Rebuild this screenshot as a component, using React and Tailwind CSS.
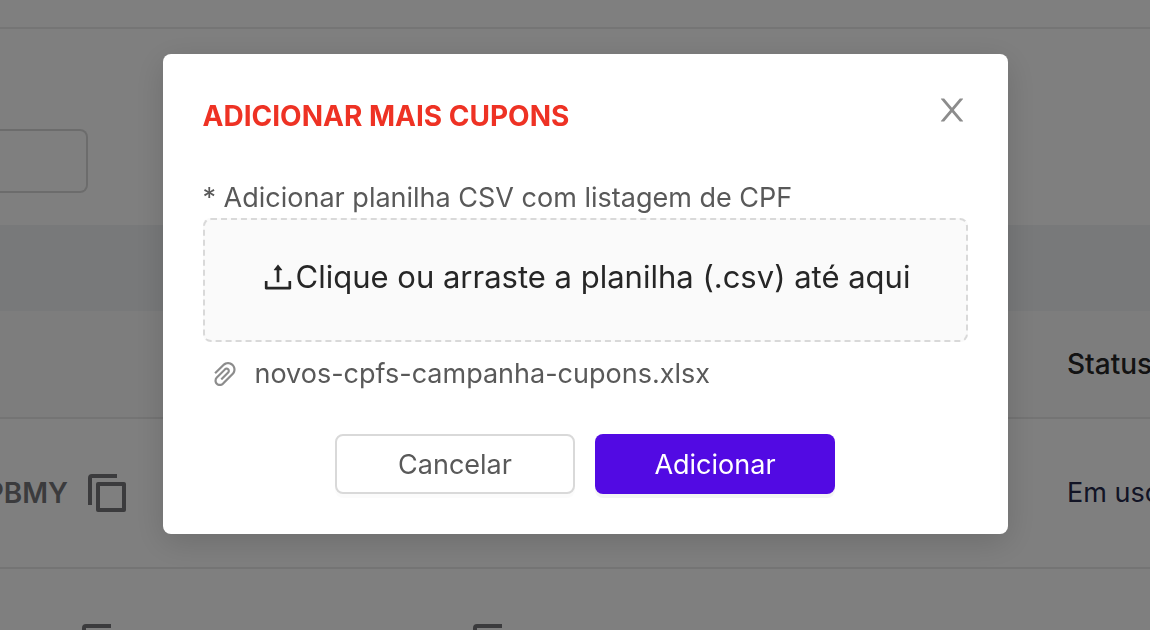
import React from "react";
import { AiOutlinePaperClip, AiOutlineUpload } from "react-icons/ai";

const CloseIcon = () => (
  <svg viewBox="0 0 1024 1024" className="size-9" fill="currentColor" aria-hidden="true">
    <path d="M563.8 512l262.5-312.9c4.4-5.2.7-13.1-6.1-13.1h-79.8c-4.7 0-9.2 2.1-12.3 5.7L511.6 449.8 295.1 191.7c-3-3.6-7.5-5.7-12.3-5.7H203c-6.8 0-10.5 7.9-6.1 13.1L459.4 512 196.9 824.9A7.95 7.95 0 0 0 203 838h79.8c4.7 0 9.2-2.1 12.3-5.7l216.5-258.1 216.5 258.1c3 3.6 7.5 5.7 12.3 5.7h79.8c6.8 0 10.5-7.9 6.1-13.1L563.8 512z" />
  </svg>
);

const CopyButton = () => (
  <button type="button" aria-label="Copiar" className="block shrink-0 text-[#77777a]">
    <svg viewBox="0 0 38 38" className="size-[38px]" fill="none" stroke="currentColor" strokeWidth="4" strokeLinejoin="round" aria-hidden="true">
      <path d="M2 31V4a2 2 0 0 1 2-2h25" />
      <rect x="10" y="10" width="26" height="26" />
    </svg>
  </button>
);

const CouponsPage = () => {
  return (
    <div className="h-screen overflow-hidden bg-white">
      <header className="h-[29px] border-b-2 border-[#ebebeb]" />
      <div className="pt-[100px] pb-8">
        <input
          type="text"
          aria-label="Buscar"
          className="block h-16 w-[88px] rounded-r-[8px] border-2 border-l-0 border-[#d9d9d9] px-4 text-[28px]"
        />
      </div>
      <div className="h-[86px] bg-[#f0f2f5]" />
      <table className="w-full table-fixed text-left text-[28px] leading-[44px]">
        <thead>
          <tr className="h-[107px] border-b-2 border-[#e8e8e8] bg-[#fbfbfb] text-[#262626]">
            <th className="w-[441px]" />
            <th />
            <th className="w-[115px] overflow-hidden px-8 font-medium">Status</th>
          </tr>
        </thead>
        <tbody>
          <tr className="h-[150px] border-b-2 border-[#e8e8e8]">
            <td>
              <div className="flex w-[126px] items-center justify-end gap-5 overflow-hidden">
                <span className="font-semibold text-[#77777a]">PBMY</span>
                <CopyButton />
              </div>
            </td>
            <td />
            <td className="overflow-hidden px-8 text-[27px] whitespace-nowrap text-[#25294a]">Em uso</td>
          </tr>
          <tr className="h-[150px] border-b-2 border-[#e8e8e8]">
            <td className="pl-[82px]">
              <CopyButton />
            </td>
            <td className="pl-8">
              <CopyButton />
            </td>
            <td />
          </tr>
        </tbody>
      </table>
    </div>
  );
};

const AddCouponsModal = () => {
  return (
    <div className="fixed inset-0 flex items-start justify-center bg-black/50 pt-[54px] pl-5">
      <div
        role="dialog"
        aria-labelledby="modal-title"
        className="w-full max-w-[845px] rounded-[8px] bg-white p-10 text-[27px] leading-[44px] text-[#595959] shadow-[0_8px_32px_rgba(0,0,0,0.15)]"
      >
        <div className="flex items-start justify-between">
          <h2 id="modal-title" className="text-[28px] leading-[44px] font-bold text-[#ee3224]">
            ADICIONAR MAIS CUPONS
          </h2>
          <button type="button" aria-label="Fechar" className="-mt-0.5 -mr-0.5 text-[#8c8c8c]">
            <CloseIcon />
          </button>
        </div>

        <label htmlFor="csv-file" className="mt-10 block leading-10">
          * Adicionar planilha CSV com listagem de CPF
        </label>
        <label className="flex h-[124px] cursor-pointer items-center justify-center rounded-[8px] border-2 border-dashed border-[#d9d9d9] bg-[#fafafa] pb-1.5 text-[31px] text-[#262626]">
          <AiOutlineUpload className="size-9 shrink-0" />
          <span>Clique ou arraste a planilha (.csv) até aqui</span>
          <input id="csv-file" type="file" accept=".csv" className="sr-only" />
        </label>

        {/* Selected file */}
        <div className="mt-2.5 flex items-center gap-3.5 pl-1.5">
          <AiOutlinePaperClip className="size-8 text-[#8c8c8c]" />
          <span>novos-cpfs-campanha-cupons.xlsx</span>
        </div>

        <div className="mt-[38px] flex justify-center gap-5">
          <button
            type="button"
            className="h-[60px] w-60 rounded-[8px] border-2 border-[#d9d9d9] bg-white pt-0.5 shadow-[0_4px_0_rgba(0,0,0,0.016)]"
          >
            Cancelar
          </button>
          <button
            type="button"
            className="h-[60px] w-60 rounded-[8px] bg-[#520ae3] pt-0.5 text-white shadow-[0_4px_0_rgba(0,0,0,0.045)]"
          >
            Adicionar
          </button>
        </div>
      </div>
    </div>
  );
};

export default function App() {
  return (
    <div className="font-[Inter,sans-serif]">
      <CouponsPage />
      <AddCouponsModal />
    </div>
  );
}
